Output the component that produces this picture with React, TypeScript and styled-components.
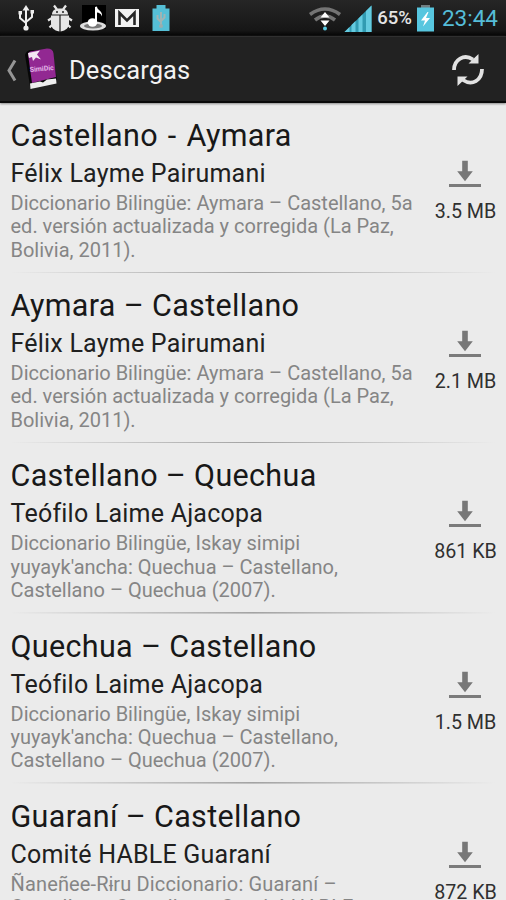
import React from "react";
import styled, { createGlobalStyle } from "styled-components";

const GlobalStyle = createGlobalStyle`
  * { box-sizing: border-box; }
  html, body { margin: 0; padding: 0; background: #ebebeb; }
  body { font-family: Roboto, "Liberation Sans", sans-serif; }
  svg { display: block; flex: none; }
`;

const Screen = styled.div`
  width: 506px;
  height: 900px;
  overflow: hidden;
  display: flex;
  flex-direction: column;
  background: #ebebeb;
`;

const StatusBar = styled.header`
  flex: none;
  height: 36px;
  display: flex;
  justify-content: space-between;
  background: linear-gradient(#262626, #161616 85%, #040404);
`;

const StatusText = styled.span<{ $size: number; $color: string; $weight?: number }>`
  font-size: ${(p) => p.$size}px;
  font-weight: ${(p) => p.$weight ?? 400};
  line-height: 37px;
  color: ${(p) => p.$color};
  white-space: nowrap;
`;

const ActionBar = styled.nav`
  flex: none;
  height: 67px;
  display: flex;
  align-items: center;
  background: #222222;
  border-top: 1px solid #303030;
  border-bottom: 2px solid #0a0a0a;
  box-shadow: 0 1px 2px #8a8a8a;
`;

const Heading = styled.h1`
  flex: 1;
  margin: 0 0 0 8px;
  padding-top: 3px;
  font-size: 25.5px;
  font-weight: 400;
  line-height: 61px;
  letter-spacing: 0.1px;
  color: #f2f2f2;
`;

const IconButton = styled.button`
  padding: 2px 0 0;
  border: 0;
  margin-right: 20px;
  background: none;
`;

const List = styled.ul`
  margin: 0;
  padding: 0;
  list-style: none;
`;

const Row = styled.li`
  height: 170.2px;
  display: flex;
  justify-content: space-between;
  padding: 14px 0 0 10.5px;
  background: linear-gradient(90deg, transparent 2%, #a2a2a2 50%, transparent 98%) bottom / 100% 1.6px no-repeat;
`;

const Entry = styled.div`
  min-width: 0;
`;

const Title = styled.h2<{ $gap: number }>`
  margin: 0;
  font-size: 30.5px;
  font-weight: 400;
  line-height: 38px;
  letter-spacing: 0.34px;
  word-spacing: ${(p) => p.$gap}px;
  color: #181818;
  white-space: nowrap;
`;

const Author = styled.h3`
  margin: 0;
  font-size: 25px;
  font-weight: 400;
  line-height: 37px;
  letter-spacing: 0.22px;
  color: #202020;
  white-space: nowrap;
`;

const Description = styled.p<{ $tracking: number }>`
  margin: 0;
  font-size: 20px;
  line-height: 23.3px;
  letter-spacing: ${(p) => p.$tracking}px;
  color: #858585;
  white-space: pre;
`;

const Download = styled.div`
  flex: none;
  width: 82px;
  padding-top: 43px;
  display: flex;
  flex-direction: column;
  align-items: center;
`;

const Size = styled.span`
  margin: 12px 0 0 1px;
  font-size: 19.7px;
  line-height: 24px;
  color: #303030;
  white-space: nowrap;
`;

const NotificationIcons = () => (
  <svg width="180" height="36" viewBox="0 0 180 36">
    <g stroke="#eee" fill="none" strokeWidth="2">
      <path d="M26 8v20M20 13v5l6 5M32 12v5l-6 5" />
      <circle cx="26" cy="28" r="2.6" fill="#eee" stroke="none" />
      <path d="M22.500 10.500L26 5l3.500 5.500z" fill="#eee" stroke="none" />
      <path d="M18.500 11h3.500v3.500h-3.500zM30.500 10H34v3.500h-3.500z" fill="#eee" stroke="none" />
    </g>
    <g fill="#e6e6e6">
      <path d="M52 14.500c0-4 3-6 8-6s8 2 8 6z" />
      <path d="M54 5.500l3 4M66 5.500l-3 4M52 18l-4 2.500M68 18l4 2.500M52 25l-2.500 2.500M68 25l2.500 2.500" stroke="#e6e6e6" strokeWidth="2.200" fill="none" />
      <path d="M51 15.500h8.400v16c-5.500-1-8.400-4-8.400-8zM60.600 15.500H69v8c0 4-2.900 7-8.400 8z" />
      <circle cx="57" cy="12" r="1" fill="#222" />
      <circle cx="63" cy="12" r="1" fill="#222" />
    </g>
    <path d="M82 5h24v24H82z" fill="#000" />
    <ellipse cx="93" cy="26" rx="13" ry="4.500" fill="#ddd" />
    <ellipse cx="93" cy="26" rx="9" ry="2.500" fill="#777" />
    <ellipse cx="92.500" cy="22.500" rx="4.800" ry="4.200" fill="#fff" />
    <path d="M95 23V7l2-.5c0 4 6 4 5 10-1-3-3-4-5-4V23z" fill="#fff" />
    <path d="M115 9h24v18h-24z" fill="#f2f2f2" />
    <path d="M119.500 25V13l7.500 7.500 7.500-7.500v12" fill="none" stroke="#262626" strokeWidth="2.600" />
    <path d="M156.500 5h9v3.500h4V31h-17V8.500h4z" fill="#55bfd6" />
    <path d="M161 12v14M157.500 15v3.500l3.500 3.500M164.500 14v3.500l-3.500 3.500" stroke="#a0b4b4" strokeWidth="2" fill="none" />
    <circle cx="161" cy="26" r="2" fill="#9aadad" />
  </svg>
);

const StatusGroup = styled.div`
  display: flex;
  padding-right: 8px;
`;

const SignalIcons = () => (
  <svg width="77" height="36" viewBox="0 0 77 36">
    <g fill="none" stroke="#747474" strokeWidth="3.600">
      <path d="M10 14.500Q25 3.500 40 14.500M15 20Q25 12 35 20" />
    </g>
    <path d="M25 12l4.500 5.500h-9zM25 26l-4.500-5.500h9z" fill="#fff" />
    <circle cx="25" cy="28.500" r="2" fill="#5acbe4" />
    <path d="M44.500 32l27-26.500V32z" fill="#319bb2" />
    <path d="M44.500 32l5-5v5zM51.500 32v-7l4-4v11zM58.500 32V18.500l4-4V32zM66 32V11l5.500-5.500V32z" fill="#65cbe0" />
  </svg>
);

const BatteryIcon = () => (
  <svg width="30" height="36" viewBox="0 0 30 36">
    <path d="M9 5h9v3H9z" fill="#717f83" />
    <path d="M5 7.500h17v24H5z" fill="#57c6df" />
    <path d="M15.500 12L9 20.500h4l-2 6 7-8.500h-4l2.500-6z" fill="#fff" />
  </svg>
);

const BackIcon = () => (
  <svg width="23" height="64" viewBox="0 0 23 64">
    <path d="M15 23.500L9 33.500l6 10" fill="none" stroke="#969696" strokeWidth="3" />
  </svg>
);

const CoverTitle = styled.text`
  font-size: 7px;
  font-weight: 700;
  fill: #e3b7e8;
`;

const BookLogo = () => (
  <svg width="38" height="64" viewBox="0 0 38 64">
    <path d="M2 18q1-4 5-5h17q5 0 6 5l4 25-25 9-2-3z" fill="#070707" />
    <path d="M5 17q1-3 5-3l14-2.500q6 0 6.500 5L33 40 9 46z" fill="#922892" />
    <path d="M5 16l12-2.500-3 4 4 5-5-2-3 3.500-1-4-3 1z" fill="#f3e5f3" />
    <CoverTitle x="7" y="35" textLength="24" lengthAdjust="spacingAndGlyphs" transform="rotate(-5 7 35)">SimiDic</CoverTitle>
    <path d="M7 46.500l10-2 3 1 4-3 9-1 .5 5-26 5.500z" fill="#eee" />
  </svg>
);

const RefreshIcon = () => (
  <svg width="36" height="36" viewBox="0 0 36 36">
    <g fill="none" stroke="#e2e2e2" strokeWidth="3.800">
      <path d="M4 18C4 7.500 14 1.500 23 7.500" />
      <path d="M32 17C32 28.500 22 34 13 28" />
    </g>
    <path d="M28.500 2v9.500H18.500zM7.500 34v-9.500h10z" fill="#e2e2e2" />
  </svg>
);

const DownloadIcon = () => (
  <svg width="32" height="28" viewBox="0 0 32 28">
    <path d="M13.200 .8h5.600v10.500h5L16 21.300 8.200 11.300h5z" fill="#777" />
    <path d="M0 24h32v3H0z" fill="#7b7b7b" />
  </svg>
);

const AYMARA = "Diccionario Bilingüe: Aymara – Castellano, 5a\ned. versión actualizada y corregida (La Paz,\nBolivia, 2011).";
const QUECHUA = "Diccionario Bilingüe, Iskay simipi\nyuyayk'ancha: Quechua – Castellano,\nCastellano – Quechua (2007).";

const dictionaries = [
  { title: "Castellano - Aymara", author: "Félix Layme Pairumani", text: AYMARA, size: "3.5 MB", gap: 2 },
  { title: "Aymara – Castellano", author: "Félix Layme Pairumani", text: AYMARA, size: "2.1 MB" },
  { title: "Castellano – Quechua", author: "Teófilo Laime Ajacopa", text: QUECHUA, size: "861 KB" },
  { title: "Quechua – Castellano", author: "Teófilo Laime Ajacopa", text: QUECHUA, size: "1.5 MB" },
  {
    title: "Guaraní – Castellano",
    author: "Comité HABLE Guaraní",
    text: "Ñaneñee-Rɨru Diccionario: Guaraní –\nCastellano, Castellano, Comité HABLE",
    size: "872 KB",
    tracking: 0.15,
  },
];

export default function App() {
  return (
    <>
      <GlobalStyle />
      <Screen>
        <StatusBar>
          <NotificationIcons />
          <StatusGroup>
            <SignalIcons />
            <StatusText $size={18.5} $color="#e4e4e4" $weight={500}>65%</StatusText>
            <BatteryIcon />
            <StatusText $size={22.5} $color="#55bdd8">23:44</StatusText>
          </StatusGroup>
        </StatusBar>
        <ActionBar>
          <BackIcon />
          <BookLogo />
          <Heading>Descargas</Heading>
          <IconButton aria-label="Actualizar">
            <RefreshIcon />
          </IconButton>
        </ActionBar>
        <List>
          {dictionaries.map((d) => (
            <Row key={d.title}>
              <Entry>
                <Title $gap={d.gap ?? 0}>{d.title}</Title>
                <Author>{d.author}</Author>
                <Description $tracking={d.tracking ?? 0}>{d.text}</Description>
              </Entry>
              <Download>
                <DownloadIcon />
                <Size>{d.size}</Size>
              </Download>
            </Row>
          ))}
        </List>
      </Screen>
    </>
  );
}
